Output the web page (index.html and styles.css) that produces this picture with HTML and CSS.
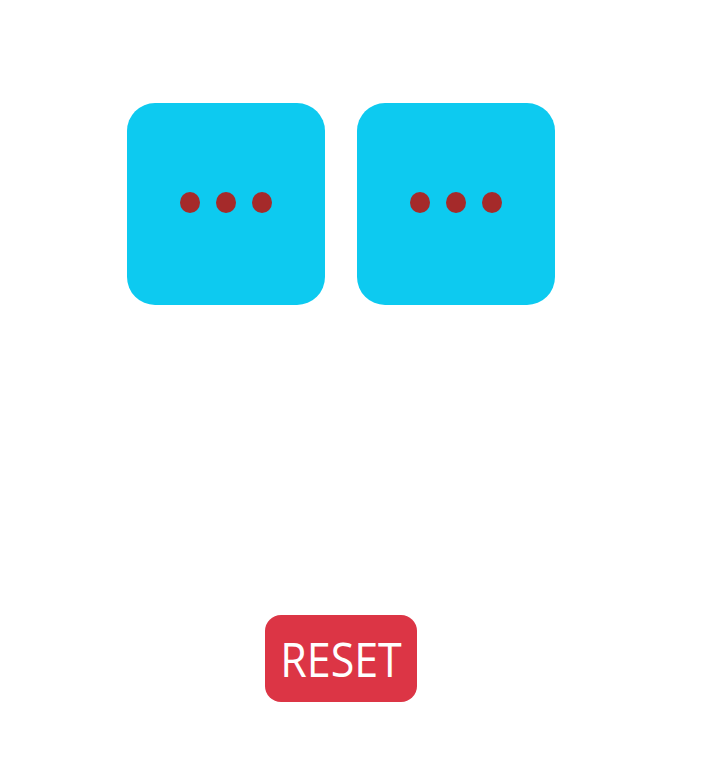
FILE: index.html
```html
<!DOCTYPE html>
<html>
<head>
<meta charset="utf-8">
<link rel="stylesheet" href="styles.css">
</head>
<body>
<div class="page">
  <div class="tiles">
    <div class="tile"><div class="dots"><span class="dot"></span><span class="dot"></span><span class="dot"></span></div></div>
    <div class="tile"><div class="dots"><span class="dot"></span><span class="dot"></span><span class="dot"></span></div></div>
  </div>
  <div class="actions">
    <button class="reset"><span class="reset-label">RESET</span></button>
  </div>
</div>
</body>
</html>
```
FILE: styles.css
```css
html, body {
  margin: 0;
  padding: 0;
  background: #ffffff;
}
.page {
  width: 682px;
  padding-top: 103px;
  font-family: "Open Sans", "Noto Sans", sans-serif;
}
.tiles {
  display: flex;
  justify-content: center;
  gap: 32px;
}
.tile {
  width: 198px;
  height: 202px;
  background: #0dcaf0;
  border-radius: 28px;
  display: flex;
  align-items: center;
  justify-content: center;
}
.dots {
  display: flex;
  gap: 16px;
  padding-bottom: 4px;
}
.dot {
  width: 20px;
  height: 21px;
  border-radius: 50%;
  background: #a52a2a;
}
.actions {
  display: flex;
  justify-content: center;
  margin-top: 310px;
}
.reset {
  width: 152px;
  height: 87px;
  border: none;
  border-radius: 16px;
  background: #dc3545;
  color: #ffffff;
  font-family: "Open Sans", "Noto Sans", sans-serif;
  font-size: 43px;
  padding: 0;
  line-height: 1;
  display: flex;
  align-items: center;
  justify-content: center;
}
.reset-label {
  display: inline-block;
  transform: scaleY(1.1);
  margin-top: 0;
}
```
